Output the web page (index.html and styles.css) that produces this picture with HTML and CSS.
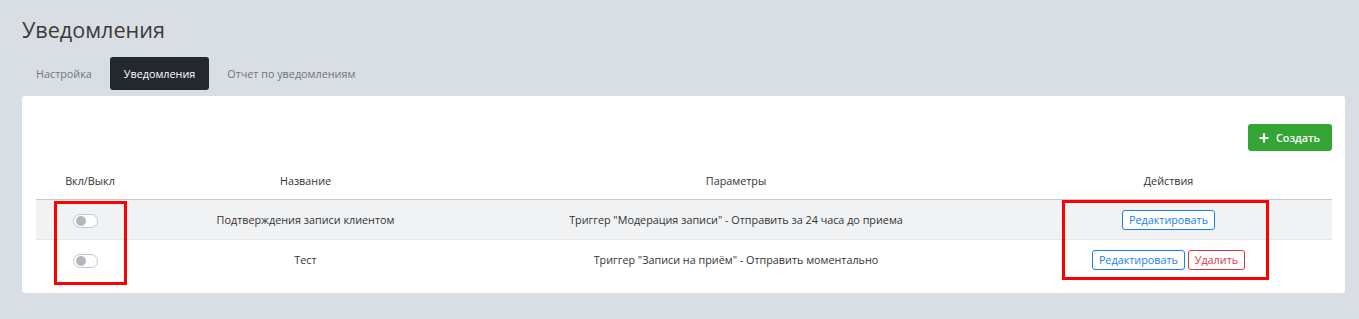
FILE: index.html
```html
<!DOCTYPE html>
<html lang="ru">
<head>
    <meta charset="UTF-8">
    <meta name="viewport" content="width=device-width, initial-scale=1.0">
    <title>Уведомления</title>
    <link rel="stylesheet" href="styles.css">
</head>

<body>
    <div class="page">
        <h1 class="page-title">Уведомления</h1>

        <div class="tabs">
            <div class="tab">Настройка</div>
            <div class="tab active">Уведомления</div>
            <div class="tab">Отчет по уведомлениям</div>
        </div>

        <div class="card">
            <div class="toolbar">
                <div class="create-btn">
                    <svg class="plus" viewBox="0 0 10 10" width="10" height="10">
                        <path d="M5 0.5v9M0.5 5h9" stroke="#fff" stroke-width="2.2"/>
                    </svg>
                    Создать
                </div>
            </div>

            <div class="table-wrap">
                <table class="notify-table">
                    <colgroup>
                        <col class="col-switch">
                        <col class="col-name">
                        <col class="col-params">
                        <col class="col-actions">
                    </colgroup>
                    <thead>
                        <tr>
                            <th>Вкл/Выкл</th>
                            <th>Название</th>
                            <th>Параметры</th>
                            <th>Действия</th>
                        </tr>
                    </thead>
                    <tbody>
                        <tr class="striped">
                            <td class="switch-cell"><span class="switch"><span class="knob"></span></span></td>
                            <td>Подтверждения записи клиентом</td>
                            <td>Триггер "Модерация записи" - Отправить за 24 часа до приема</td>
                            <td>
                                <span class="btn-outline edit">Редактировать</span>
                            </td>
                        </tr>
                        <tr>
                            <td class="switch-cell"><span class="switch"><span class="knob"></span></span></td>
                            <td>Тест</td>
                            <td>Триггер "Записи на приём" - Отправить моментально</td>
                            <td class="actions">
                                <span class="btn-outline edit">Редактировать</span>
                                <span class="btn-outline delete">Удалить</span>
                            </td>
                        </tr>
                    </tbody>
                </table>

                <!-- red annotation frames -->
                <div class="mark mark-switch"></div>
                <div class="mark mark-actions"></div>
            </div>
        </div>
    </div>
</body>

</html>
```

FILE: styles.css
```css
html {
    background-color: #d9dee5;
}

body {
    margin: 0;
    font-family: "Open Sans", "Liberation Sans", sans-serif;
    color: #333;
}

.page {
    padding: 15px 14px 0 22px;
}

.page-title {
    margin: 0;
    font-size: 21.6px;
    font-weight: 400;
    line-height: 29px;
    color: #3b3b3b;
}

.tabs {
    display: flex;
    gap: 4px;
    margin-top: 13px;
}

.tab {
    height: 33px;
    line-height: 33px;
    padding: 0 14px;
    font-size: 10.8px;
    color: #6f757c;
    border-radius: 3px;
}

.tab.active {
    background-color: #23272e;
    color: #fff;
}

.card {
    margin-top: 6px;
    background-color: #fff;
    border-radius: 3px;
    padding: 28px 13px 14px 14px;
}

.toolbar {
    display: flex;
    justify-content: flex-end;
}

.create-btn {
    display: flex;
    align-items: center;
    gap: 7px;
    height: 27px;
    width: 84px;
    box-sizing: border-box;
    padding-left: 11px;
    background-color: #34a534;
    border-radius: 3px;
    color: #fff;
    font-size: 10.8px;
    font-weight: 600;
}

.table-wrap {
    position: relative;
    margin-top: 9px;
}

.notify-table {
    width: 100%;
    table-layout: fixed;
    border-collapse: collapse;
    font-size: 10.8px;
    text-align: center;
    color: #333;
}

.col-switch {
    width: 108px;
}

.col-name {
    width: 323px;
}

.col-params {
    width: 538px;
}

.notify-table th {
    font-weight: 400;
    line-height: 18px;
    padding: 12px 4px 9px;
    border-bottom: 1px solid #c6cbd2;
}

.notify-table td {
    height: 39px;
    line-height: 18px;
    padding: 0 4px;
    vertical-align: middle;
}

.notify-table tr.striped td {
    background-color: #f1f2f4;
    border-bottom: 1px solid #e3e6ea;
}

.switch-cell {
    text-align: left;
}

.switch {
    display: inline-flex;
    align-items: center;
    vertical-align: middle;
    margin-left: 33px;
    width: 25px;
    height: 14px;
    box-sizing: border-box;
    border: 1px solid #c3c7cd;
    border-radius: 7px;
    background-color: #fff;
    padding-left: 2px;
}

.knob {
    width: 10px;
    height: 10px;
    border-radius: 50%;
    background-color: #b2b7be;
}

.btn-outline {
    display: inline-block;
    height: 20px;
    line-height: 18px;
    box-sizing: border-box;
    padding: 0 6px;
    border-radius: 3px;
    background-color: #fff;
    font-size: 10.8px;
    vertical-align: middle;
}

.actions {
    white-space: nowrap;
}

.btn-outline.edit {
    border: 1px solid #1a7ef2;
    color: #1a7ef2;
}

.btn-outline.delete {
    border: 1px solid #dc3545;
    color: #dc3545;
}

.mark {
    position: absolute;
    border: 3px solid #ff0000;
    box-sizing: border-box;
}

.mark-switch {
    left: 18px;
    top: 41px;
    width: 73px;
    height: 84px;
}

.mark-actions {
    left: 1026px;
    top: 40px;
    width: 207px;
    height: 80px;
}
```
